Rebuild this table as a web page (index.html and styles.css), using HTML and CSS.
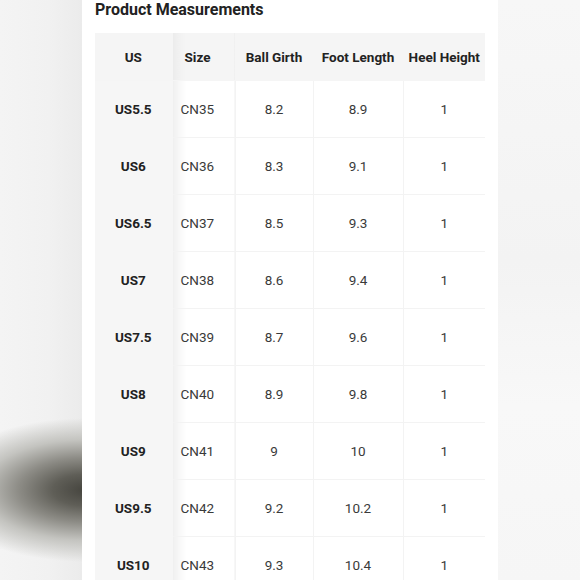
FILE: index.html
```html
<!DOCTYPE html>
<html>
<head>
<meta charset="utf-8">
<link rel="stylesheet" href="styles.css">
</head>
<body>
<div class="page">
  <div class="side side-left"></div>
  <main class="card">
    <h1 class="title">Product Measurements</h1>
    <table class="sizes">
      <colgroup>
        <col class="w-us"><col class="w-size"><col class="w-ball"><col class="w-foot"><col class="w-heel">
      </colgroup>
      <thead>
        <tr><th class="c-us">US</th><th class="c-size">Size</th><th>Ball Girth</th><th>Foot Length</th><th>Heel Height</th></tr>
      </thead>
      <tbody>
        <tr><td class="c-us">US5.5</td><td class="c-size">CN35</td><td>8.2</td><td>8.9</td><td>1</td></tr>
        <tr><td class="c-us">US6</td><td class="c-size">CN36</td><td>8.3</td><td>9.1</td><td>1</td></tr>
        <tr><td class="c-us">US6.5</td><td class="c-size">CN37</td><td>8.5</td><td>9.3</td><td>1</td></tr>
        <tr><td class="c-us">US7</td><td class="c-size">CN38</td><td>8.6</td><td>9.4</td><td>1</td></tr>
        <tr><td class="c-us">US7.5</td><td class="c-size">CN39</td><td>8.7</td><td>9.6</td><td>1</td></tr>
        <tr><td class="c-us">US8</td><td class="c-size">CN40</td><td>8.9</td><td>9.8</td><td>1</td></tr>
        <tr><td class="c-us">US9</td><td class="c-size">CN41</td><td>9</td><td>10</td><td>1</td></tr>
        <tr><td class="c-us">US9.5</td><td class="c-size">CN42</td><td>9.2</td><td>10.2</td><td>1</td></tr>
        <tr><td class="c-us">US10</td><td class="c-size">CN43</td><td>9.3</td><td>10.4</td><td>1</td></tr>
      </tbody>
    </table>
  </main>
  <div class="side side-right"></div>
</div>
</body>
</html>
```
FILE: styles.css
```css
html, body {
  margin: 0;
  padding: 0;
  width: 580px;
  height: 580px;
  overflow: hidden;
  font-family: Roboto, "Liberation Sans", Arial, sans-serif;
}
.page {
  display: flex;
  width: 580px;
  height: 580px;
}
.side {
  flex: 0 0 auto;
  height: 580px;
}
.side-left {
  width: 82px;
  background:
    radial-gradient(ellipse 150px 72px at 86px 490px, #45443e 0%, #5f5e57 22%, #8d8c86 45%, #c4c4c0 70%, rgba(238,238,238,0) 100%),
    linear-gradient(90deg, #f4f4f4 0%, #f1f1f1 60%, #ebebeb 100%);
}
.side-right {
  width: 82px;
  background: linear-gradient(180deg, #f7f7f7 0%, #f3f3f3 45%, #f8f8f8 70%, #f6f6f6 100%);
}
.card {
  flex: 0 0 auto;
  width: 403px;
  padding-left: 13px;
  background: #fff;
  height: 580px;
}
.title {
  margin: 0;
  height: 33px;
  font-size: 16px;
  line-height: 20px;
  font-weight: 700;
  color: #222;
}
.sizes {
  border-collapse: collapse;
  table-layout: fixed;
  width: 390px;
}
.w-us { width: 77px; }
.w-size { width: 63px; }
.w-ball { width: 78px; }
.w-foot { width: 90px; }
.w-heel { width: 82px; }
.sizes th, .sizes td {
  padding: 0;
  text-align: center;
  white-space: nowrap;
  border-right: 1px solid #f3f3f3;
  border-bottom: 1px solid #f3f3f3;
}
.sizes th:last-child, .sizes td:last-child { border-right: none; }
.sizes th {
  height: 47px;
  background: #f5f5f5;
  font-size: 13.5px;
  font-weight: 700;
  color: #222;
  border-color: #f5f5f5;
}
.sizes td {
  height: 56px;
  font-size: 13.5px;
  color: #3a3a3a;
}
.sizes td.c-us {
  background: #f6f6f6;
  font-weight: 700;
  color: #222;
  border-color: #f6f6f6;
}
.sizes .c-size {
  text-align: left;
  padding-left: 8px;
}
.sizes td.c-size {
  background: linear-gradient(90deg, #efefef 0px, #f9f9f9 8px, #ffffff 14px);
}
.sizes th.c-size {
  padding-left: 12px;
  background: linear-gradient(90deg, #ebebeb 0px, #f2f2f2 8px, #f5f5f5 14px);
}
```
